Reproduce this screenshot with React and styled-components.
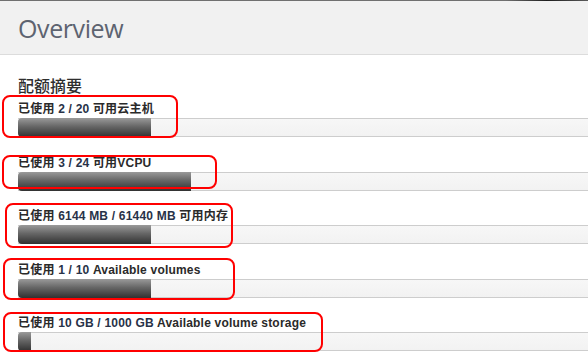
import React from 'react';
import styled, { createGlobalStyle } from 'styled-components';

const GlobalStyle = createGlobalStyle`
  html, body {
    margin: 0;
    padding: 0;
    background: #fff;
    overflow: hidden;
  }
  body {
    font-family: 'Liberation Sans', 'Noto Sans CJK SC', Arial, sans-serif;
  }
`;

const Page = styled.div`
  width: 588px;
  height: 358px;
  overflow: hidden;
`;

const TopRule = styled.div`
  height: 1px;
  background: linear-gradient(
    to right,
    #707070 0%,
    #707070 86%,
    #1e1e1e 93%,
    #5a5a5a 100%
  );
`;

const Header = styled.header`
  height: 54px;
  box-sizing: border-box;
  background: #f1f1f1;
  border-bottom: 1px solid #dcdcdc;
  padding: 10px 18px 0;
`;

const PageTitle = styled.h1`
  margin: 0;
  font-family: 'Open Sans', 'Noto Sans', sans-serif;
  font-weight: 400;
  font-size: 25px;
  letter-spacing: -0.4px;
  line-height: 34px;
  color: #5d6370;
`;

const Content = styled.section`
  padding: 20px 0 0 18px;
`;

const SectionTitle = styled.h3`
  margin: 0 0 6px;
  font-family: 'Noto Sans CJK SC', 'Noto Sans', sans-serif;
  font-weight: 500;
  font-size: 16px;
  line-height: 20px;
  color: #2e2e2e;
`;

const List = styled.div`
  display: flex;
  flex-direction: column;
  gap: 17.5px;
`;

const Row = styled.div`
  position: relative;
  display: flex;
  flex-direction: column;
  gap: 1px;
`;

const Label = styled.div`
  font-family: 'Liberation Sans', 'Noto Sans CJK SC', Arial, sans-serif;
  font-weight: 700;
  font-size: 12px;
  letter-spacing: 0.2px;
  line-height: 16px;
  color: #2a2a2a;
  white-space: nowrap;
`;

const Figure = styled.span`
  color: #283248;
`;

const Track = styled.div`
  width: 1330px;
  height: 19px;
  box-sizing: border-box;
  background: linear-gradient(to bottom, #f7f7f7, #f2f2f2);
  border-top: 1px solid #cdcdcd;
  border-bottom: 1px solid #cdcdcd;
`;

const Fill = styled.div`
  height: 19px;
  margin-top: -1px;
  border-radius: 4px 0 0 4px;
  background: linear-gradient(to bottom, #9a9a9a 0%, #666 45%, #313131 100%);
`;

const Marker = styled.div`
  position: absolute;
  box-sizing: border-box;
  border: 2px solid #ff0000;
  border-radius: 8px;
  pointer-events: none;
`;

const quotas = [
  { used: '2', total: '20', name: '可用云主机', ratio: 2 / 20, box: [-16, -6, 176, 43] },
  { used: '3', total: '24', name: '可用VCPU', ratio: 3 / 24, box: [-16, 0, 215, 34] },
  { used: '6144 MB', total: '61440 MB', name: '可用内存', ratio: 6144 / 61440, box: [-13, -5, 228, 45] },
  { used: '1', total: '10', name: 'Available volumes', ratio: 1 / 10, box: [-15, -4, 232, 42] },
  { used: '10 GB', total: '1000 GB', name: 'Available volume storage', ratio: 10 / 1000, box: [-15, -3, 320, 40] },
];

const QuotaRow = ({ used, total, name, ratio, box }) => {
  const pct = Math.round(ratio * 100);
  const [left, top, width, height] = box;
  return (
    <Row>
      <Label>
        已使用 <Figure>{used} / {total}</Figure> {name}
      </Label>
      <Track>
        <Fill style={{ width: `${pct}%` }} />
      </Track>
      <Marker style={{ left, top, width, height }} />
    </Row>
  );
};

const App = () => {
  return (
    <>
      <GlobalStyle />
      <Page>
        <TopRule />
        <Header>
          <PageTitle>Overview</PageTitle>
        </Header>
        <Content>
          <SectionTitle>配额摘要</SectionTitle>
          <List>
            {quotas.map((q) => (
              <QuotaRow key={q.name} {...q} />
            ))}
          </List>
        </Content>
      </Page>
    </>
  );
};

export default App;
